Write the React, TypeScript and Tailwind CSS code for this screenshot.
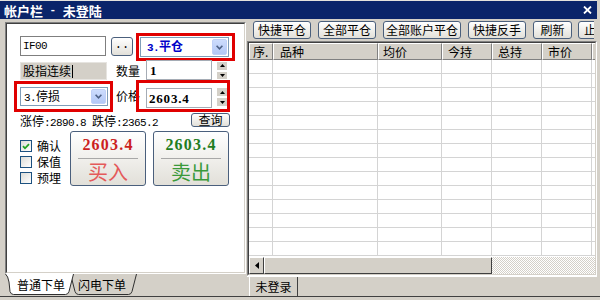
import React from "react";

function Chevron() {
  return (
    <svg width="7" height="5" viewBox="0 0 7 5">
      <path d="M0.6 0.8 L3.5 3.8 L6.4 0.8" fill="none" stroke="#4d6185" strokeWidth="1.6" />
    </svg>
  );
}

function UpTri() {
  return (
    <svg width="5" height="3" viewBox="0 0 5 3">
      <polygon points="2.5,0 5,3 0,3" fill="#000" />
    </svg>
  );
}

function DownTri() {
  return (
    <svg width="5" height="3" viewBox="0 0 5 3">
      <polygon points="0,0 5,0 2.5,3" fill="#000" />
    </svg>
  );
}

function M({ children }: { children: React.ReactNode }) {
  return (
    <span className="font-['Liberation_Mono',monospace] text-[11px] tracking-[-0.6px] whitespace-pre">{children}</span>
  );
}

function Spin({ tall }: { tall: boolean }) {
  return (
    <div
      className={
        tall
          ? "ml-[5px] mt-[5px] w-[10px] h-[18px] flex flex-col gap-[2px] shrink-0"
          : "ml-[5px] mt-[1px] w-[10px] h-[17px] flex flex-col gap-[2px] shrink-0"
      }
    >
      <div className="flex-1 bg-[#d4d0c8] flex items-center justify-center">
        <UpTri />
      </div>
      <div className="flex-1 bg-[#d4d0c8] flex items-center justify-center">
        <DownTri />
      </div>
    </div>
  );
}

function XpBtn({ className, children }: { className: string; children: React.ReactNode }) {
  return (
    <div
      className={`rounded-[3px] border border-[#4a5f7c] bg-linear-to-b from-white to-[#e2e0d9] flex items-center justify-center shrink-0 ${className}`}
    >
      {children}
    </div>
  );
}

function Check({ checked, label }: { checked: boolean; label: string }) {
  return (
    <div className="flex items-center h-[12px]">
      <div className="w-[12px] h-[12px] border border-[#1c5180] bg-linear-to-br from-[#dcdcd7] to-white flex items-center justify-center shrink-0">
        {checked && (
          <svg width="8" height="7" viewBox="0 0 8 7">
            <path d="M1 3.2 L3 5.3 L7 1.2" fill="none" stroke="#21a121" strokeWidth="1.8" />
          </svg>
        )}
      </div>
      <span className="ml-[5px] font-['Noto_Sans_CJK_SC',sans-serif] text-[12px]">{label}</span>
    </div>
  );
}

const headers: [string, string][] = [
  ["序.", "w-[24px] pl-[3px]"],
  ["品种", "w-[105px] pl-[6px]"],
  ["均价", "w-[64px] pl-[4px]"],
  ["今持", "w-[50px] pl-[5px]"],
  ["总持", "w-[50px] pl-[5px]"],
  ["市价", "w-[50px] pl-[5px]"],
];

const cellW = ["w-[24px]", "w-[105px]", "w-[64px]", "w-[50px]", "w-[50px]", "w-[50px]"];
const rows = Array.from({ length: 14 }, (_, i) => i);

export default function App() {
  return (
    <div className="w-[600px] h-[300px] bg-[#d4d0c8] flex flex-col overflow-hidden font-['Noto_Sans_CJK_SC',sans-serif] text-[12px] text-black leading-none">
      {/* title bar */}
      <div className="h-[1px] mr-[3px] bg-[#e4e2dc] shrink-0" />
      <div className="h-[18px] mr-[3px] bg-[#0a246a] flex items-center pl-[4px] text-white shrink-0">
        <span className="font-bold text-[13px]">帐户栏</span>
        <span className="font-['Liberation_Mono',monospace] font-bold text-[11px] whitespace-pre"> - </span>
        <span className="font-bold text-[13px]">未登陆</span>
        <svg className="ml-auto mr-[5px]" width="9" height="8" viewBox="0 0 9 8">
          <path d="M1 0.5 L8 7.5 M8 0.5 L1 7.5" stroke="#fff" strokeWidth="1.8" />
        </svg>
      </div>

      {/* body */}
      <div className="h-[277px] flex shrink-0">
        {/* left column */}
        <div className="w-[247px] flex flex-col shrink-0">
          <div className="mt-[3px] ml-[5px] w-[241px] h-[252px] border border-t-[#808080] border-l-[#808080] border-r-white border-b-white">
            <div className="w-full h-full border border-t-[#404040] border-l-[#404040] border-r-[#d4d0c8] border-b-[#d4d0c8] bg-white flex flex-col">
              {/* row A */}
              <div className="mt-[9px] h-[28px] flex items-start shrink-0">
                <div className="ml-[13px] mt-[3px] w-[86px] h-[20px] border border-[#7f7f7f] flex items-center pl-[2px] shrink-0">
                  <M>IF00</M>
                </div>
                <XpBtn className="ml-[5px] mt-[4px] w-[22px] h-[19px]">
                  <span className="pb-[4px] font-['Liberation_Mono',monospace]">..</span>
                </XpBtn>
                <div className="ml-[3px] w-[99px] h-[28px] border-[3px] border-[#e00000] shrink-0">
                  <div className="ml-[1px] mt-[1px] w-[89px] h-[20px] border border-[#7f9db9] bg-white flex items-center">
                    <span className="pl-[6px] font-bold text-[#0000c8]">
                      <span className="font-['Liberation_Mono',monospace] text-[11px] tracking-[-0.6px]">3.</span>平仓
                    </span>
                    <div className="ml-auto mr-[1px] w-[15px] h-[16px] rounded-[2px] bg-linear-to-b from-[#cddcfd] to-[#b3c8f6] border border-[#bfd0f8] flex items-center justify-center">
                      <Chevron />
                    </div>
                  </div>
                </div>
              </div>

              {/* row B */}
              <div className="h-[19px] flex items-start shrink-0">
                <div className="ml-[13px] mt-[1px] w-[87px] h-[18px] bg-[#d4d0c8] border border-[#e6e4e0] flex items-center pl-[2px] shrink-0">
                  <span>股指连续</span>
                  <span className="ml-[1px] w-[1px] h-[13px] bg-black" />
                </div>
                <span className="ml-[9px] self-center shrink-0">数量</span>
                <div className="ml-[6px] -mt-[1px] w-[66px] h-[20px] border border-[#a5acb5] bg-white flex items-center pl-[3px] shrink-0">
                  <span className="font-['Liberation_Serif',serif] font-bold text-[13px]">1</span>
                </div>
                <Spin tall={false} />
              </div>

              {/* row C */}
              <div className="h-[32px] flex items-start shrink-0">
                <div className="ml-[7px] mt-[1px] w-[99px] h-[31px] border-[3px] border-[#e00000] shrink-0">
                  <div className="ml-[3px] mt-[3px] w-[88px] h-[19px] border border-[#7f9db9] bg-white flex items-center">
                    <span className="pl-[3px]">
                      <M>3.</M>停损
                    </span>
                    <div className="ml-auto mr-[1px] w-[15px] h-[15px] rounded-[2px] bg-linear-to-b from-[#cddcfd] to-[#b3c8f6] border border-[#bfd0f8] flex items-center justify-center">
                      <Chevron />
                    </div>
                  </div>
                </div>
                <span className="ml-[3px] self-center shrink-0">价格</span>
                <div className="-ml-[4px] relative z-10 w-[94px] h-[32px] border-[3px] border-[#e00000] flex items-start shrink-0">
                  <div className="ml-[7px] mt-[5px] w-[66px] h-[20px] border border-[#a5acb5] bg-white flex items-center pl-[2px] shrink-0">
                    <span className="font-['Liberation_Serif',serif] font-bold text-[13px] tracking-[0.8px]">2603.4</span>
                  </div>
                  <Spin tall={true} />
                </div>
              </div>

              {/* row D */}
              <div className="h-[15px] flex items-start shrink-0">
                <span className="ml-[13px] mt-[3px]">
                  涨停<M>:2890.8 </M>跌停<M>:2365.2</M>
                </span>
                <XpBtn className="ml-auto mr-[14px] mt-[1px] w-[39px] h-[14px]">
                  <span>查询</span>
                </XpBtn>
              </div>

              {/* row E */}
              <div className="mt-[4px] h-[55px] flex items-start shrink-0">
                <div className="ml-[13px] mt-[9px] w-[50px] flex flex-col gap-[4px] shrink-0">
                  <Check checked={true} label="确认" />
                  <Check checked={false} label="保值" />
                  <Check checked={false} label="预埋" />
                </div>
                <XpBtn className="w-[76px] h-[55px] flex-col !justify-start">
                  <div className="h-[26px] w-full flex items-center justify-center">
                    <span className="font-['Liberation_Serif',serif] font-bold text-[16px] tracking-[1.2px] text-[#cc1f1f]">2603.4</span>
                  </div>
                  <div className="w-[60px] h-[1px] bg-[#a8a8a8]" />
                  <div className="flex-1 w-full flex items-center justify-center">
                    <span className="text-[20px] text-[#e45a5a]">买入</span>
                  </div>
                </XpBtn>
                <XpBtn className="ml-[7px] w-[76px] h-[55px] flex-col !justify-start">
                  <div className="h-[26px] w-full flex items-center justify-center">
                    <span className="font-['Liberation_Serif',serif] font-bold text-[16px] tracking-[1.2px] text-[#1f7d1f]">2603.4</span>
                  </div>
                  <div className="w-[60px] h-[1px] bg-[#a8a8a8]" />
                  <div className="flex-1 w-full flex items-center justify-center">
                    <span className="text-[20px] text-[#3a9a3a]">卖出</span>
                  </div>
                </XpBtn>
              </div>
            </div>
          </div>

          {/* tabs */}
          <div className="relative h-[22px] shrink-0">
            <svg className="absolute left-0 top-0" width="247" height="22" viewBox="0 0 247 22">
              <path
                d="M70.5 0 L75 17.5 Q76 20.5 78.5 20.5 L128.5 20.5 Q131 20.5 132 17.5 L136.5 0"
                fill="#d4d0c8"
                stroke="#303030"
                strokeWidth="1"
              />
              <path
                d="M5.5 0 Q8 2 9 8 L10 17.5 Q11 20.5 13.5 20.5 L65.5 20.5 Q68 20.5 69 17.5 L73.5 0"
                fill="#ffffff"
                stroke="#303030"
                strokeWidth="1"
              />
            </svg>
            <div className="relative flex h-full items-center text-[12px]">
              <span className="ml-[9px] w-[64px] text-center">普通下单</span>
              <span className="-ml-[3px] w-[64px] text-center">闪电下单</span>
            </div>
          </div>
        </div>

        {/* right column */}
        <div className="w-[350px] flex flex-col shrink-0">
          {/* toolbar */}
          <div className="h-[22px] flex items-start overflow-hidden mr-[3px] shrink-0">
            <XpBtn className="ml-[6px] mt-[2px] w-[58px] h-[18px]">快捷平仓</XpBtn>
            <XpBtn className="ml-[7px] mt-[2px] w-[58px] h-[18px]">全部平仓</XpBtn>
            <XpBtn className="ml-[7px] mt-[2px] w-[78px] h-[18px]">全部账户平仓</XpBtn>
            <XpBtn className="ml-[7px] mt-[2px] w-[58px] h-[18px]">快捷反手</XpBtn>
            <XpBtn className="ml-[7px] mt-[2px] w-[39px] h-[18px]">刷新</XpBtn>
            <XpBtn className="ml-[6px] mt-[2px] w-[58px] h-[18px] !justify-start pl-[5px]">止损</XpBtn>
          </div>

          {/* grid */}
          <div className="h-[235px] border border-t-[#808080] border-l-[#808080] border-r-white border-b-white shrink-0">
            <div className="w-full h-full border border-t-[#404040] border-l-[#404040] border-r-[#d4d0c8] border-b-[#d4d0c8] bg-white flex flex-col overflow-hidden">
              <div className="h-[17px] flex shrink-0">
                {headers.map(([t, c]) => (
                  <div
                    key={t}
                    className={`${c} h-full bg-[#d4d0c8] border-t border-l border-white border-r border-r-[#808080] border-b border-b-[#808080] flex items-center shrink-0`}
                  >
                    {t}
                  </div>
                ))}
                <div className="flex-1 h-full bg-[#d4d0c8] border-t border-l border-white border-b border-b-[#808080]" />
              </div>
              <div className="h-[197px] flex flex-col overflow-hidden shrink-0">
                {rows.map((r) => (
                  <div key={r} className="h-[14px] flex border-b border-[#d4d4d4] shrink-0">
                    {cellW.map((w, i) => (
                      <div key={i} className={`${w} h-full border-r border-[#d4d4d4] shrink-0`} />
                    ))}
                    <div className="flex-1" />
                  </div>
                ))}
              </div>
              <div className="h-[17px] flex shrink-0">
                <div className="w-[15px] h-full bg-[#d4d0c8] border border-t-white border-l-white border-r-[#404040] border-b-[#404040] flex items-center justify-center shrink-0">
                  <svg width="4" height="7" viewBox="0 0 4 7">
                    <polygon points="4,0 0,3.5 4,7" fill="#000" />
                  </svg>
                </div>
                <div className="w-[228px] h-full bg-[#d4d0c8] border border-t-white border-l-white border-r-[#404040] border-b-[#404040] shrink-0" />
                <div className="flex-1 h-full bg-[repeating-conic-gradient(#d4d0c8_0%_25%,#ffffff_0%_50%)] bg-[length:2px_2px]" />
              </div>
            </div>
          </div>

          {/* status */}
          <div className="h-[20px] border-t border-white flex items-stretch shrink-0">
            <div className="ml-[2px] w-[49px] bg-[#d4d0c8] border-l border-white border-r border-r-[#404040] flex items-center justify-center">
              未登录
            </div>
          </div>
        </div>
      </div>
      <div className="h-[1px] bg-[#404040] shrink-0" />
    </div>
  );
}
